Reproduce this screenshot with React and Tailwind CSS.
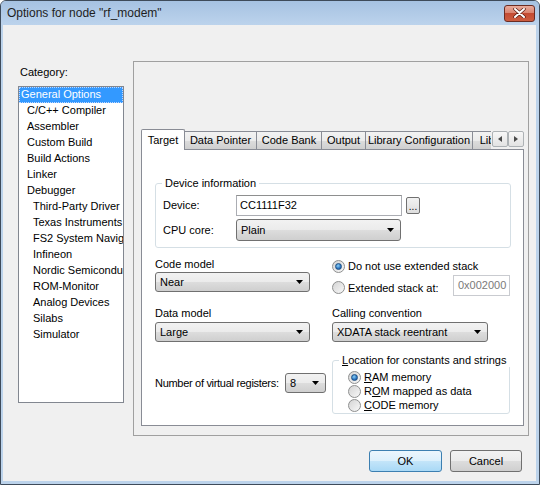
import React from 'react';

const categories = [
  { label: 'General Options', level: 0, selected: true },
  { label: 'C/C++ Compiler', level: 1 },
  { label: 'Assembler', level: 1 },
  { label: 'Custom Build', level: 1 },
  { label: 'Build Actions', level: 1 },
  { label: 'Linker', level: 1 },
  { label: 'Debugger', level: 1 },
  { label: 'Third-Party Driver', level: 2 },
  { label: 'Texas Instruments', level: 2 },
  { label: 'FS2 System Navigator', level: 2 },
  { label: 'Infineon', level: 2 },
  { label: 'Nordic Semiconductor', level: 2 },
  { label: 'ROM-Monitor', level: 2 },
  { label: 'Analog Devices', level: 2 },
  { label: 'Silabs', level: 2 },
  { label: 'Simulator', level: 2 }
];

const tabs = [
  { label: 'Target', width: 'w-[44px]', active: true },
  { label: 'Data Pointer', width: 'w-[73px]' },
  { label: 'Code Bank', width: 'w-[66px]' },
  { label: 'Output', width: 'w-[45px]' },
  { label: 'Library Configuration', width: 'w-[108px]' },
  { label: 'Library Options', width: 'w-[90px]' }
];

const levelPad = ['pl-[2px]', 'pl-[8px]', 'pl-[14px]'];

const DropArrow = () => (
  <svg width="7" height="4" viewBox="0 0 7 4" className="shrink-0 mr-[3px]">
    <polygon points="0,0 7,0 3.5,4" fill="#000" />
  </svg>
);

const Combo = ({ value, className }) => (
  <div
    className={`flex items-center justify-between pl-[4px] pr-[3px] border border-[#707070] rounded-[3px] bg-[linear-gradient(#f2f2f2,#ebebeb_50%,#dddddd_50%,#cfcfcf)] ${className}`}
  >
    <span className="leading-[14px]">{value}</span>
    <DropArrow />
  </div>
);

const Radio = ({ checked }) => (
  <div className="w-[13px] h-[13px] shrink-0 rounded-full border border-[#8e8f8f] bg-[linear-gradient(135deg,#d4d4d4,#f8f8f8)] flex items-center justify-center">
    {checked && (
      <div className="w-[7px] h-[7px] rounded-full border border-[#1c4f84] bg-[radial-gradient(circle_at_40%_35%,#8ad0f5,#2a73c0_60%,#1b4f8a)]" />
    )}
  </div>
);

const RadioRow = ({ checked, children, className = '' }) => (
  <div className={`flex items-center ${className}`}>
    <Radio checked={checked} />
    <span className="ml-[3px] leading-[14px]">{children}</span>
  </div>
);

const SmallArrow = ({ dir }) => (
  <div className="w-[16px] h-[16px] border border-[#adb2b5] rounded-[2px] bg-[linear-gradient(#f7f7f7,#e3e3e3)] flex items-center justify-center">
    <svg width="4" height="6" viewBox="0 0 4 6">
      {dir === 'left' ? (
        <polygon points="4,0 4,6 0,3" fill="#4a4a4a" />
      ) : (
        <polygon points="0,0 0,6 4,3" fill="#4a4a4a" />
      )}
    </svg>
  </div>
);

export default function App() {
  return (
    <div className="w-[540px] h-[485px] flex flex-col border border-[#3e4b5a] rounded-t-[6px] overflow-hidden bg-[#bcd3eb] text-[11px] text-black font-['Liberation_Sans',Arial,sans-serif]">
      {/* Title bar */}
      <div className="h-[24px] shrink-0 flex items-center pl-[6px] bg-[linear-gradient(#a6c2e2,#bcd3ec)]">
        <span className="text-[12px] text-[#1e1e1e]">Options for node "rf_modem"</span>
        <div className="ml-auto mr-[4px] w-[31px] h-[17px] rounded-[3px] border border-[#6b2c23] bg-[linear-gradient(#e9aa9c,#da8571_45%,#c44b33_50%,#cd5d40)] flex items-center justify-center">
          <svg width="13" height="10" viewBox="0 0 13 10">
            <path d="M2 1 L11 9 M11 1 L2 9" stroke="#5a1d14" strokeWidth="3.4" strokeLinecap="round" />
            <path d="M2 1 L11 9 M11 1 L2 9" stroke="#ffffff" strokeWidth="2" strokeLinecap="round" />
          </svg>
        </div>
      </div>

      {/* Body */}
      <div className="flex-1 ml-[2px] mr-[3px] mb-[3px] bg-[#f0f0f0] flex flex-col">
        <div className="flex pt-[36px] pl-[15px]">
          {/* Category list */}
          <div className="w-[106px] shrink-0">
            <div className="mt-[5px] h-[13px] leading-[13px] pl-[2px]">Category:</div>
            <div className="mt-[7px] h-[317px] border border-[#828790] bg-white overflow-hidden">
              {categories.map((c) => (
                <div
                  key={c.label}
                  className={`h-[16px] leading-[15px] whitespace-nowrap ${levelPad[c.level]} ${
                    c.selected ? 'bg-[#3399ff] text-white outline-1 outline-dotted outline-[#c0d8ff] -outline-offset-1' : ''
                  }`}
                >
                  {c.label}
                </div>
              ))}
            </div>
          </div>

          {/* Options panel */}
          <div className="ml-[9px] w-[396px] h-[375px] border border-[#a0a0a0] pt-[67px] pl-[7px]">
            <div className="w-[383px] h-[20px] flex items-end">
              <div className="w-[350px] h-[21px] -mb-px flex items-end overflow-hidden relative z-10">
                {tabs.map((t, i) => (
                  <div
                    key={t.label}
                    className={`${t.width} shrink-0 flex items-center justify-center whitespace-nowrap border border-[#898c95] border-b-0 ${
                      i > 0 ? '-ml-px' : ''
                    } ${
                      t.active
                        ? 'h-[21px] bg-white relative z-10 rounded-t-[2px]'
                        : 'h-[18px] mb-px bg-[linear-gradient(#f2f2f2,#ebebeb_50%,#dddddd_50%,#cfcfcf)]'
                    }`}
                  >
                    {t.label}
                  </div>
                ))}
              </div>
              <div className="ml-px self-start mt-[2px] flex">
                <SmallArrow dir="left" />
                <SmallArrow dir="right" />
              </div>
            </div>

            {/* Tab page */}
            <div className="w-[383px] h-[277px] border border-[#898c95] bg-white pl-[13px]">
              {/* Device information */}
              <div className="mt-[33px] w-[356px] h-[65px] relative border border-[#d5dfe5] rounded-[3px] pt-[11px] pl-[7px]">
                <span className="absolute -top-[8px] left-[6px] px-[3px] bg-white leading-[14px]">Device information</span>
                <div className="flex items-center h-[21px]">
                  <span className="w-[73px] shrink-0">Device:</span>
                  <div className="w-[166px] h-[21px] border border-[#abadb3] border-t-[#8e8f8f] bg-white px-[3px] flex items-center">
                    CC1111F32
                  </div>
                  <div className="ml-[4px] w-[14px] h-[17px] border border-[#707070] rounded-[2px] bg-[linear-gradient(#f2f2f2,#dedede)] flex items-end justify-center leading-[10px] text-[10px] pb-[1px]">
                    ...
                  </div>
                </div>
                <div className="mt-[3px] flex items-center h-[22px]">
                  <span className="w-[73px] shrink-0">CPU core:</span>
                  <Combo value="Plain" className="w-[165px] h-[22px]" />
                </div>
              </div>

              <div className="flex">
                {/* Left column */}
                <div className="w-[177px] shrink-0">
                  <div className="mt-[9px] h-[14px] leading-[14px]">Code model</div>
                  <Combo value="Near" className="mt-[1px] w-[155px] h-[20px]" />
                  <div className="mt-[14px] h-[14px] leading-[14px]">Data model</div>
                  <Combo value="Large" className="mt-[2px] w-[155px] h-[20px]" />
                  <div className="mt-[31px] h-[20px] flex items-center">
                    <span className="w-[130px] shrink-0 whitespace-nowrap tracking-[-0.3px]">Number of virtual registers:</span>
                    <Combo value="8" className="w-[41px] h-[20px]" />
                  </div>
                </div>

                {/* Right column */}
                <div className="w-[178px] shrink-0">
                  <RadioRow checked className="mt-[11px] h-[14px]">
                    Do not use extended stack
                  </RadioRow>
                  <div className="mt-[2px] h-[21px] flex items-center">
                    <RadioRow className="mt-[4px]">Extended stack at:</RadioRow>
                    <div className="ml-auto w-[57px] h-[21px] border border-[#c9cbd0] bg-white px-[4px] flex items-center text-[#7a7a7a]">
                      0x002000
                    </div>
                  </div>
                  <div className="mt-[10px] h-[14px] leading-[14px]">Calling convention</div>
                  <Combo value="XDATA stack reentrant" className="mt-[2px] w-[156px] h-[20px]" />
                  <div className="mt-[18px] w-[178px] h-[54px] relative border border-[#d5dfe5] rounded-[3px] pt-[9px] pl-[15px]">
                    <span className="absolute -top-[8px] left-[6px] px-[3px] bg-white leading-[14px] whitespace-nowrap">
                      <span className="underline">L</span>ocation for constants and strings
                    </span>
                    <RadioRow checked className="h-[14px]">
                      <span className="underline">R</span>AM memory
                    </RadioRow>
                    <RadioRow className="h-[14px]">
                      R<span className="underline">O</span>M mapped as data
                    </RadioRow>
                    <RadioRow className="h-[14px]">
                      <span className="underline">C</span>ODE memory
                    </RadioRow>
                  </div>
                </div>
              </div>
            </div>
          </div>
        </div>

        {/* Buttons */}
        <div className="mt-[14px] flex pl-[366px]">
          <div className="w-[73px] h-[22px] rounded-[3px] border border-[#3c7fb1] bg-[linear-gradient(#ecf6fd,#dcf0fc_50%,#c4e5f9_50%,#a9d9f6)] flex items-center justify-center">
            OK
          </div>
          <div className="ml-[8px] w-[72px] h-[22px] rounded-[3px] border border-[#707070] bg-[linear-gradient(#f2f2f2,#ebebeb_50%,#dddddd_50%,#cfcfcf)] flex items-center justify-center">
            Cancel
          </div>
        </div>
      </div>
    </div>
  );
}
